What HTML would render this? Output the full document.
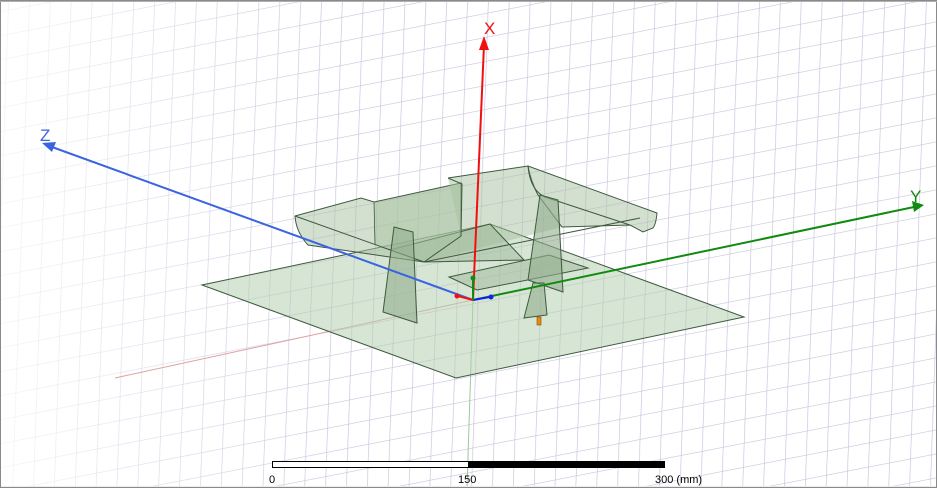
<!DOCTYPE html>
<html><head><style>
html,body{margin:0;padding:0;background:#fff;}
svg{display:block;font-family:"Liberation Sans",sans-serif;}
</style></head><body>
<svg width="937" height="488" viewBox="0 0 937 488" xmlns="http://www.w3.org/2000/svg">
<defs>
<pattern id="g" width="21" height="24" patternUnits="userSpaceOnUse" patternTransform="translate(8,10) skewY(-11) skewX(-2)">
<path d="M0 0V24M0 0H21" stroke="#c6c2dc" stroke-width="1.3" fill="none"/>
</pattern>
<linearGradient id="fade" x1="0" x2="1" y1="0" y2="0">
<stop offset="0" stop-color="#fff" stop-opacity="0.8"/>
<stop offset="0.14" stop-color="#fff" stop-opacity="0.45"/>
<stop offset="0.35" stop-color="#fff" stop-opacity="0"/>
</linearGradient>
</defs>
<rect width="937" height="488" fill="#fff"/>
<rect width="937" height="488" fill="url(#g)"/>
<rect width="937" height="488" fill="url(#fade)"/>
<line x1="473" y1="300" x2="115" y2="378" stroke="#e0a0a0" stroke-width="1"/>
<line x1="473" y1="300" x2="467" y2="488" stroke="#9cc79c" stroke-width="1"/>
<!-- ground plane -->
<polygon points="202,285 490,224 744,317 456,378" fill="#b5cfb0" fill-opacity="0.55" stroke="#3e5a3e" stroke-width="1"/>
<!-- back fill of upper structure -->
<polygon points="374,202 461,183 450,178 528,166 538,195 562,227 424,262 375,245" fill="#a8c2a2" fill-opacity="0.5"/>
<!-- upper panel -->
<polygon points="390,250 490,224 524,260 424,262" fill="#9fb89a" fill-opacity="0.5" stroke="#3e5a3e" stroke-width="1"/>
<!-- inner plate -->
<polygon points="449,277 549,255 588,268 477,290" fill="#9fb89a" fill-opacity="0.5" stroke="#3e5a3e" stroke-width="1"/>
<!-- left trough -->
<path d="M295,216 L361,198 L374,202 L461,183 L461,236 L424,262 L308,245 Q296,232 295,216Z" fill="#a8c2a2" fill-opacity="0.5" stroke="#3e5a3e" stroke-width="1"/>
<line x1="295" y1="216" x2="424" y2="262" stroke="#3e5a3e"/>
<line x1="374" y1="202" x2="375" y2="245" stroke="#3e5a3e" stroke-width="0.8"/>
<!-- top right slab -->
<path d="M448,178 L528,166 L657,213 Q656,224 653,228 L643,232 L630,225 L562,227 L538,195 Q530,180 528,166 M448,178 L462,184 L461,236" fill="#a8c2a2" fill-opacity="0.5" stroke="#3e5a3e" stroke-width="1"/>
<path d="M528,166 Q530,190 545,197 L630,225" fill="none" stroke="#3e5a3e"/>
<path d="M424,262 L640,218" fill="none" stroke="#3e5a3e"/>
<!-- legs -->
<polygon points="394,227 413,232 417,323 383,312" fill="#93ae8e" fill-opacity="0.6" stroke="#3e5a3e"/>
<polygon points="540,195 558,200 563,292 528,280" fill="#93ae8e" fill-opacity="0.6" stroke="#3e5a3e"/>
<polygon points="533,283 544,283 547,315 524,318" fill="#93ae8e" fill-opacity="0.6" stroke="#3e5a3e"/>
<rect x="537" y="317" width="4" height="8" fill="#e88a10" stroke="#8a4a00" stroke-width="0.6"/>
<!-- axes -->
<line x1="473" y1="300" x2="484" y2="45" stroke="#f01010" stroke-width="2"/>
<polygon points="484,36 479,50 489,50" fill="#f01010"/>
<text x="484" y="34" font-size="17" fill="#f01010">X</text>
<line x1="473" y1="300" x2="52" y2="147" stroke="#3a64e0" stroke-width="2"/>
<polygon points="42,143 56,142 52,152" fill="#3a64e0"/>
<text x="40" y="141" font-size="17" fill="#3a64e0">Z</text>
<line x1="473" y1="300" x2="914" y2="207" stroke="#108a10" stroke-width="2"/>
<polygon points="924,205 912,201 914,212" fill="#108a10"/>
<text x="910" y="202" font-size="17" fill="#108a10">Y</text>
<line x1="473" y1="300" x2="458" y2="296" stroke="#f01010" stroke-width="2"/>
<circle cx="457" cy="296" r="2.5" fill="#f01010"/>
<line x1="473" y1="300" x2="490" y2="297" stroke="#1020f0" stroke-width="2"/>
<circle cx="491" cy="297" r="2.5" fill="#1020f0"/>
<line x1="473" y1="300" x2="473" y2="278" stroke="#108a10" stroke-width="2"/>
<circle cx="473" cy="278" r="2.5" fill="#108a10"/>
<!-- scale bar -->
<rect x="272.5" y="461.5" width="196" height="6" fill="#fff" stroke="#000"/>
<rect x="468" y="461" width="197" height="7" fill="#000"/>
<text x="269" y="483" font-size="11" fill="#000">0</text>
<text x="458" y="483" font-size="11" fill="#000">150</text>
<text x="655" y="483" font-size="11" fill="#000">300 (mm)</text>
<rect x="0" y="486" width="937" height="2" fill="#ececec"/>
<rect x="0.5" y="0.5" width="936" height="487" fill="none" stroke="#8a8a8a" stroke-width="1"/>
<line x1="0" y1="1.5" x2="937" y2="1.5" stroke="#b0b0b0"/>
</svg>
</body></html>
